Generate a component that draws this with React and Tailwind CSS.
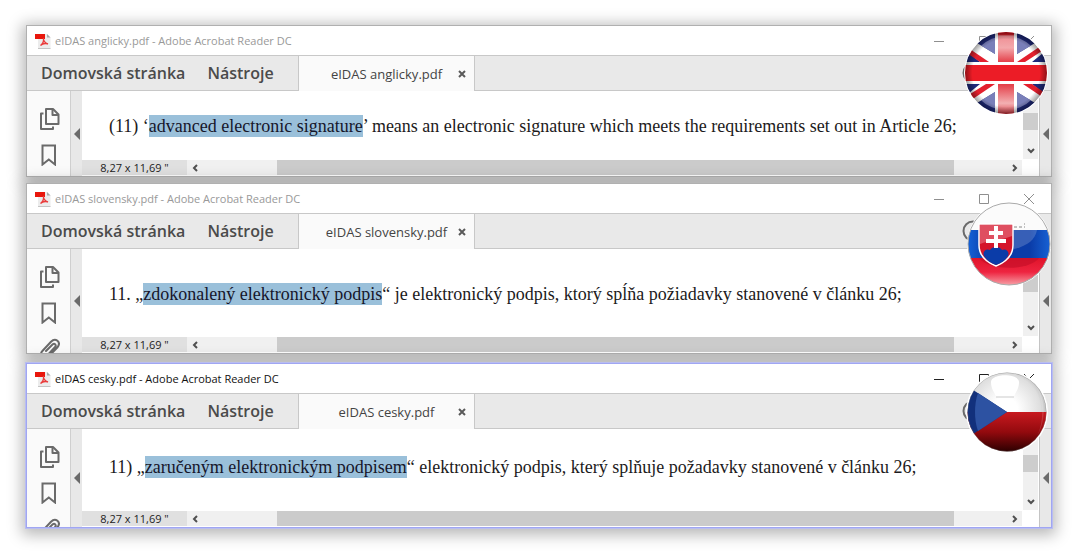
import clsx from "clsx";

const DOCS = [
  {
    id: "en",
    file: "eIDAS anglicky.pdf",
    before: "(11) ‘",
    marked: "advanced electronic signature",
    after:
      "’ means an electronic signature which meets the requirements set out in Article 26;",
    pad: "pt-6 pb-[23px]",
    thumb: "mt-[22px]",
    Flag: FlagUK,
    flagPlace: "top-[5px] right-[3px]",
  },
  {
    id: "sk",
    file: "eIDAS slovensky.pdf",
    before: "11. „",
    marked: "zdokonalený elektronický podpis",
    after:
      "“ je elektronický podpis, ktorý spĺňa požiadavky stanovené v článku 26;",
    pad: "pt-[34px] pb-8",
    thumb: "mt-[26px]",
    Flag: FlagSK,
    flagPlace: "top-[18px] right-0",
  },
  {
    id: "cz",
    file: "eIDAS cesky.pdf",
    before: "11) „",
    marked: "zaručeným elektronickým podpisem",
    after:
      "“ elektronický podpis, který splňuje požadavky stanovené v článku 26;",
    pad: "pt-[27px] pb-[33px]",
    thumb: "mt-[26px]",
    active: true,
    Flag: FlagCZ,
    flagPlace: "top-[6px] right-[2px]",
  },
];

export default function App() {
  return (
    <main className="flex flex-col gap-[6px] bg-white pt-[25px] pr-[30px] pb-[30px] pl-[26px] font-['Open_Sans','Noto_Sans',sans-serif]">
      {DOCS.map((doc) => (
        <ReaderWindow key={doc.id} doc={doc} />
      ))}
    </main>
  );
}

function ReaderWindow({ doc }) {
  let { Flag } = doc;
  return (
    <section
      className={clsx(
        "relative border bg-white",
        doc.active
          ? "mt-[3px] border-[#a0a6f2] shadow-[0_0_0_1px_#b9bdf0,0_3px_14px_4px_rgba(0,0,0,0.28)]"
          : "border-[#b0b0b0] shadow-[0_3px_14px_4px_rgba(0,0,0,0.28)]"
      )}
    >
      <TitleBar doc={doc} />
      <TabBar doc={doc} />
      <div className="flex bg-white">
        <SideTools />
        <Collapse className="border-l border-[#cfcfcf]" label="Expand tools" />
        <div className="min-w-0 flex-1">
          <div className="flex">
            <p
              className={clsx(
                "min-w-0 flex-1 pl-[27px] font-['Liberation_Serif',serif] text-[18px] leading-[22px] whitespace-nowrap text-[#1c1a20]",
                doc.pad
              )}
            >
              {doc.before}
              <mark className="inline-block bg-[#9ac0da] text-[#16162a]">
                {doc.marked}
              </mark>
              {doc.after}
            </p>
            <VerticalScroll thumb={doc.thumb} />
          </div>
          <StatusBar />
        </div>
        <Collapse className="border-l border-[#c4c4c4]" label="Expand panel" />
      </div>
      <div className={clsx("absolute size-[84px]", doc.flagPlace)}>
        <Flag />
      </div>
    </section>
  );
}

function TitleBar({ doc }) {
  return (
    <header className="flex h-[29px] items-center bg-white pl-2">
      <PdfIcon />
      <h2
        className={clsx(
          "ml-1 flex-1 text-[11px] leading-4",
          doc.active ? "text-[#111111]" : "text-[#999999]"
        )}
      >
        {doc.file} - Adobe Acrobat Reader DC
      </h2>
      <div
        className={clsx("flex", doc.active ? "text-[#222222]" : "text-[#8f8f8f]")}
      >
        <WinButton label="Minimize" d="M0 5.5H10" />
        <WinButton label="Maximize" d="M.5 .5H9.5V9.5H.5Z" />
        <WinButton label="Close" d="M0 0L10 10M10 0L0 10" />
      </div>
    </header>
  );
}

function WinButton({ label, d }) {
  return (
    <button aria-label={label} className="flex h-7 w-[45px] items-center justify-center">
      <svg width="10" height="10" viewBox="0 0 10 10" fill="none" stroke="currentColor">
        <path d={d} />
      </svg>
    </button>
  );
}

function TabBar({ doc }) {
  return (
    <nav className="flex h-9 border-y border-[#c8c8c8] bg-[#e9e9e9]">
      <div className="flex w-[272px] items-center gap-[22px] border-r border-[#c8c8c8] pl-[14px] text-[16px] leading-5 font-semibold text-[#4b4b4b]">
        <button>Domovská stránka</button>
        <button>Nástroje</button>
      </div>
      <div className="-mb-px flex w-[176px] items-center border-r border-[#c8c8c8] bg-[#fafafa]">
        <button className="flex-1 pl-4 text-center text-[13px] leading-5 text-[#444444]">
          {doc.file}
        </button>
        <button aria-label="Close tab" className="mr-2 text-[#5a5a5a]">
          <svg width="8" height="8" viewBox="0 0 8 8" fill="none" stroke="currentColor" strokeWidth="2">
            <path d="M1 1L7 7M7 1L1 7" />
          </svg>
        </button>
      </div>
      <div className="flex flex-1 items-center justify-end pr-[67px]">
        <button aria-label="Help">
          <svg width="22" height="22" viewBox="0 0 22 22" fill="none" stroke="#6a6a6a" strokeWidth="2">
            <circle cx="11" cy="11" r="9.5" />
          </svg>
        </button>
      </div>
    </nav>
  );
}

function SideTools() {
  return (
    <aside className="w-[43px] overflow-hidden bg-[#fafafa] pt-[17px] pl-[2px] text-[#6a6a6a] contain-size">
      <div className="flex flex-col items-center gap-[14px]">
        <button aria-label="Page thumbnails">
          <svg width="20" height="22" viewBox="0 0 20 22" fill="none" stroke="currentColor" strokeWidth="2" strokeLinejoin="round">
            <path d="M6 1H13L18.500 6.500V16H6Z" />
            <path d="M12.500 1V7H18.500" />
            <path d="M3.500 5.500H1V21H13V18.500" />
          </svg>
        </button>
        <button aria-label="Bookmarks">
          <svg width="20" height="22" viewBox="0 0 20 22" fill="none" stroke="currentColor" strokeWidth="2">
            <path d="M2.500 1.500H15V20.500L8.800 15.500L2.500 20.500Z" />
          </svg>
        </button>
        <button aria-label="Attachments">
          <svg width="20" height="22" viewBox="0 0 20 22" fill="none" stroke="currentColor" strokeWidth="2" strokeLinecap="round">
            <path d="M6 13L12.500 6.500C14.600 4.800 16.900 7 14.900 9.300L7.400 17.200C3.500 21 -1 16.500 2.600 12.700L11 3.800C15.500 -1 21.500 4.200 17.500 9.300L12 15" />
          </svg>
        </button>
      </div>
    </aside>
  );
}

function Collapse({ className, label }) {
  return (
    <button
      aria-label={label}
      className={clsx("flex w-3 items-center justify-center bg-[#e8e8e8]", className)}
    >
      <svg width="6" height="12" viewBox="0 0 6 12" fill="#6a6a6a">
        <path d="M6 0V12L0 6Z" />
      </svg>
    </button>
  );
}

function VerticalScroll({ thumb }) {
  return (
    <div className="mr-px mb-px flex w-[15px] flex-col bg-[#f0f0f0]">
      <div className={clsx("h-[17px] bg-[#cdcdcd]", thumb)} />
      <button aria-label="Scroll down" className="mt-auto mb-[3px] flex justify-center">
        <Chevron d="M1 1L4 4L7 1" />
      </button>
    </div>
  );
}

function Chevron({ d }) {
  return (
    <svg width="8" height="8" viewBox="0 0 8 8" fill="none" stroke="#505050" strokeWidth="2">
      <path d={d} />
    </svg>
  );
}

function StatusBar() {
  return (
    <footer className="mr-[17px] mb-px flex h-[15px] items-center bg-[#f0f0f0]">
      <span className="flex h-full w-[105px] items-center justify-center bg-[#e0e0e0] text-[11px] leading-[15px] text-[#222222]">
        8,27 x 11,69 "
      </span>
      <button aria-label="Scroll left" className="ml-1">
        <Chevron d="M6 1L3 4L6 7" />
      </button>
      <div className="mr-14 ml-[78px] h-full flex-1 bg-[#cbcbcb]" />
      <button aria-label="Scroll right" className="mr-1">
        <Chevron d="M3 1L6 4L3 7" />
      </button>
    </footer>
  );
}

function PdfIcon() {
  return (
    <svg width="16" height="16" viewBox="0 0 16 16" fill="none">
      <path d="M3 1H12L15.500 4.500V15.500H3Z" fill="#ececec" />
      <path d="M12 1V4.500H15.500Z" fill="#a8a8a8" />
      <path d="M3 15.500H15.500" stroke="#c4c4c4" />
      <path d="M0 1H10V6H0Z" fill="#e8160c" />
      <path
        d="M8.500 5C9 8.500 7.500 11 5.500 12.500C7.500 10.500 10 10 13 11C11 10.500 9 8.500 8.300 6"
        stroke="#ea3b3b"
        strokeWidth="1.300"
      />
    </svg>
  );
}

function FlagUK() {
  return (
    <svg viewBox="0 0 84 84" role="img" aria-label="English">
      <defs>
        <clipPath id="uk-clip">
          <circle cx="42" cy="42" r="41" />
        </clipPath>
        <clipPath id="uk-inner">
          <circle cx="42" cy="42" r="37" />
        </clipPath>
        <radialGradient id="uk-edge">
          <stop offset="0.820" stopColor="#000" stopOpacity="0" />
          <stop offset="1" stopColor="#000" stopOpacity="0.400" />
        </radialGradient>
        <linearGradient id="uk-red" x1="0" y1="0" x2="0" y2="1">
          <stop offset="0.040" stopColor="#d81420" />
          <stop offset="0.060" stopColor="#ef8f95" />
          <stop offset="0.200" stopColor="#f3a9ac" />
          <stop offset="0.390" stopColor="#e2323d" />
          <stop offset="0.610" stopColor="#e2323d" />
          <stop offset="0.860" stopColor="#f3b0b2" />
          <stop offset="0.960" stopColor="#e05a62" />
          <stop offset="1" stopColor="#c41420" />
        </linearGradient>
      </defs>
      <circle cx="42" cy="42" r="42" fill="#fff" />
      <g clipPath="url(#uk-clip)">
        <path d="M0 0H84V84H0Z" fill="#fff" />
        {/* outer wedges */}
        <path d="M31 0V23L8 9V0ZM53 0V23L76 9V0ZM31 84V61L8 75V84ZM53 84V61L76 75V84Z" fill="#1f2a7c" />
        <path d="M0 18L16 31H0ZM84 18L68 31H84ZM0 66L16 53H0ZM84 66L68 53H84Z" fill="#1f2a7c" />
        <g clipPath="url(#uk-inner)">
          <path d="M31 0V23L8 9V0ZM53 0V23L76 9V0ZM31 84V61L8 75V84ZM53 84V61L76 75V84Z" fill="#8a8ec4" opacity="0.850" />
        </g>
        <path d="M0 14L25 31H16L0 20ZM84 10L53 31H61L84 16ZM0 74L31 53H22L0 67ZM84 70L59 53H68L84 64Z" fill="#e3202e" />
        <path d="M34 0H50V84H34Z" fill="url(#uk-red)" />
        <path d="M0 31H84V53H0Z" fill="#fff" />
        <path d="M0 34H84V50H0Z" fill="#ec1c26" />
        <circle cx="42" cy="42" r="41" fill="url(#uk-edge)" />
      </g>
    </svg>
  );
}

function FlagSK() {
  return (
    <svg viewBox="0 0 84 84" role="img" aria-label="Slovensky">
      <defs>
        <clipPath id="sk-clip">
          <circle cx="42" cy="42" r="41" />
        </clipPath>
        <linearGradient id="sk-red" x1="0" y1="0" x2="0" y2="1">
          <stop offset="0" stopColor="#e0142a" />
          <stop offset="0.500" stopColor="#ee2440" />
          <stop offset="1" stopColor="#f7a9ae" />
        </linearGradient>
        <linearGradient id="sk-blue">
          <stop offset="0" stopColor="#1663d8" />
          <stop offset="0.250" stopColor="#0b3ca8" />
          <stop offset="0.750" stopColor="#0b3ca8" />
          <stop offset="1" stopColor="#1763d6" />
        </linearGradient>
      </defs>
      <circle cx="42" cy="42" r="42" fill="#fff" />
      <g clipPath="url(#sk-clip)">
        <path d="M0 0H84V28H0Z" fill="#fbfbfb" />
        <path d="M0 28H84V56H0Z" fill="url(#sk-blue)" />
        <path d="M0 56H84V84H0Z" fill="url(#sk-red)" />
        <path d="M12 56H72C62 69 22 69 12 56Z" fill="#c8102a" opacity="0.700" />
        <path d="M47 28H70C68 38 60 44 47 47Z" fill="#fff" opacity="0.180" />
        <path d="M47 25H50M52 25H55M57 22H58M57 25H58" stroke="#888" strokeWidth="1" />
      </g>
      <path d="M12 22H46V43C46 53 39 60 29 64C19 60 12 53 12 43Z" fill="#d5152b" stroke="#fff" strokeWidth="1.500" />
      <path d="M13 23H45V34C36 38 22 38 13 42Z" fill="#fff" opacity="0.250" />
      <path d="M17 54C15 50 19 46 23 48C25 44 33 44 35 48C39 46 43 50 41 54C38 59 34 61 29 63C24 61 20 59 17 54Z" fill="#0b3ca8" />
      <path d="M29 24V46M22 31H36M19 39H39" stroke="#fff" strokeWidth="4" />
      <circle cx="42" cy="42" r="41" fill="none" stroke="#aaa" />
    </svg>
  );
}

function FlagCZ() {
  return (
    <svg viewBox="0 0 84 84" role="img" aria-label="Česky">
      <defs>
        <clipPath id="cz-clip">
          <circle cx="42" cy="42" r="39.500" />
        </clipPath>
        <linearGradient id="cz-red" gradientUnits="userSpaceOnUse" x1="0" y1="42" x2="0" y2="82">
          <stop offset="0" stopColor="#c8191f" />
          <stop offset="0.500" stopColor="#930a0e" />
          <stop offset="1" stopColor="#2a0000" />
        </linearGradient>
        <radialGradient id="cz-white" gradientUnits="userSpaceOnUse" cx="40" cy="40" r="42">
          <stop offset="0.300" stopColor="#fff" />
          <stop offset="0.850" stopColor="#dedede" />
          <stop offset="1" stopColor="#bcbcbc" />
        </radialGradient>
      </defs>
      <circle cx="42" cy="42" r="41" fill="#fff" />
      <g clipPath="url(#cz-clip)">
        <path d="M0 0H84V42H0Z" fill="url(#cz-white)" />
        <path d="M0 42H84V84H0Z" fill="url(#cz-red)" />
        <path d="M42 42L-4 12V72Z" fill="#12307c" />
        <path d="M42 42L13 23C9 34 9 50 13 61Z" fill="#2d52a2" />
        <path d="M26 12C26 3 54 3 54 12C54 20 50 22 49 27H31C30 22 26 20 26 12Z" fill="#fff" />
        <path d="M31 27H49" stroke="#ddd" strokeWidth="1.500" />
        <path d="M72 18C79 32 79 52 72 66C80 54 82 30 72 18Z" fill="#fff" opacity="0.150" />
        <circle cx="42" cy="42" r="39.500" fill="none" stroke="#777" opacity="0.500" />
      </g>
    </svg>
  );
}
